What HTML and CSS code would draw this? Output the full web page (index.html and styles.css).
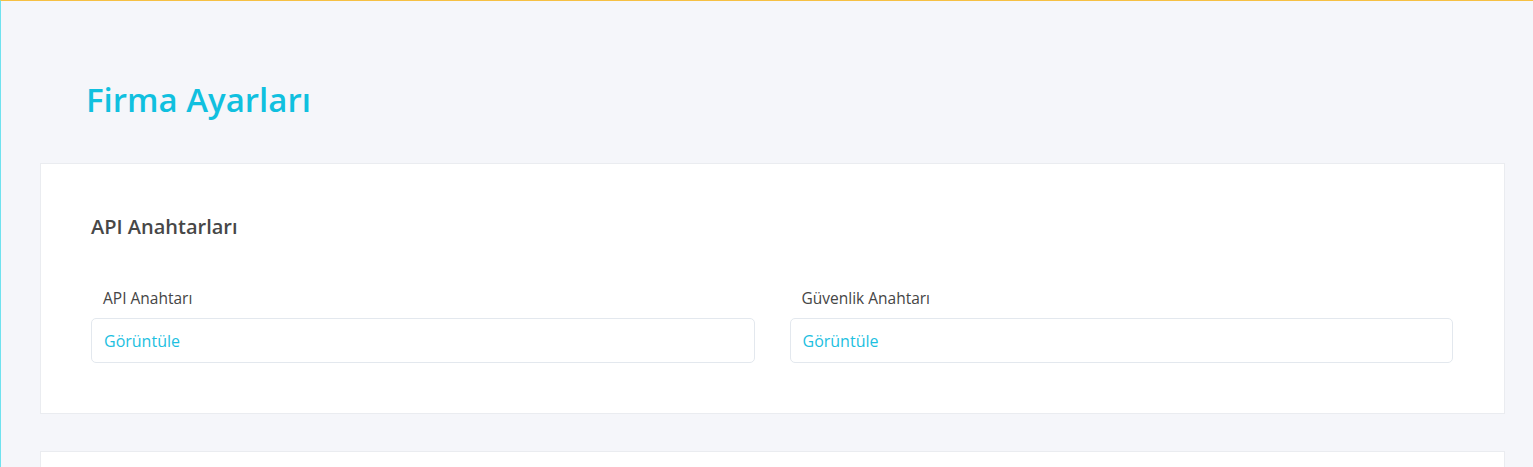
FILE: index.html
```html
<!DOCTYPE html>
<html lang="tr">
<head>
<meta charset="utf-8">
<title>Firma Ayarları</title>
<link rel="stylesheet" href="styles.css">
</head>
<body>
<div class="app">
  <main class="content">
    <h1 class="page-title">Firma Ayarları</h1>
    <section class="card">
      <h2 class="card-title">API Anahtarları</h2>
      <div class="fields">
        <div class="field">
          <label class="field-label">API Anahtarı</label>
          <div class="field-box"><a class="reveal" href="#">Görüntüle</a></div>
        </div>
        <div class="field">
          <label class="field-label">Güvenlik Anahtarı</label>
          <div class="field-box"><a class="reveal" href="#">Görüntüle</a></div>
        </div>
      </div>
    </section>
    <section class="card card-next"></section>
  </main>
</div>
</body>
</html>
```

FILE: styles.css
```css
html, body {
  margin: 0;
  padding: 0;
  height: 100%;
  overflow: hidden;
}
body {
  font-family: "Open Sans", "Noto Sans", sans-serif;
  background: #f5f6fa;
  color: #444;
}
.app {
  height: 100%;
  border-top: 1px solid #f6c043;
  border-left: 1px solid #6fe2ef;
  box-sizing: border-box;
  overflow: hidden;
}
.content {
  padding: 0 28px 0 39px;
}
.page-title {
  margin: 0 0 41px;
  padding: 77px 0 0 46px;
  font-size: 33px;
  line-height: 44px;
  font-weight: 600;
  color: #10c0df;
}
.card {
  background: #fff;
  border: 1px solid #eaecf0;
  padding: 50px 51px 50px 50px;
}
.card-title {
  margin: 0 0 48px;
  font-size: 20px;
  line-height: 26px;
  font-weight: 600;
  color: #474747;
}
.fields {
  display: grid;
  grid-template-columns: 1fr 1fr;
  column-gap: 35px;
}
.field-label {
  display: block;
  padding-left: 12px;
  margin-bottom: 10px;
  font-size: 15.5px;
  line-height: 20px;
  color: #454545;
}
.field-box {
  height: 45px;
  box-sizing: border-box;
  border: 1px solid #e3e8ee;
  border-radius: 5px;
  padding: 0 12px;
  display: flex;
  align-items: center;
}
.reveal {
  font-size: 16px;
  color: #1cc0df;
  text-decoration: none;
}
.card-next {
  margin-top: 37px;
  height: 60px;
  padding: 0;
}
```
